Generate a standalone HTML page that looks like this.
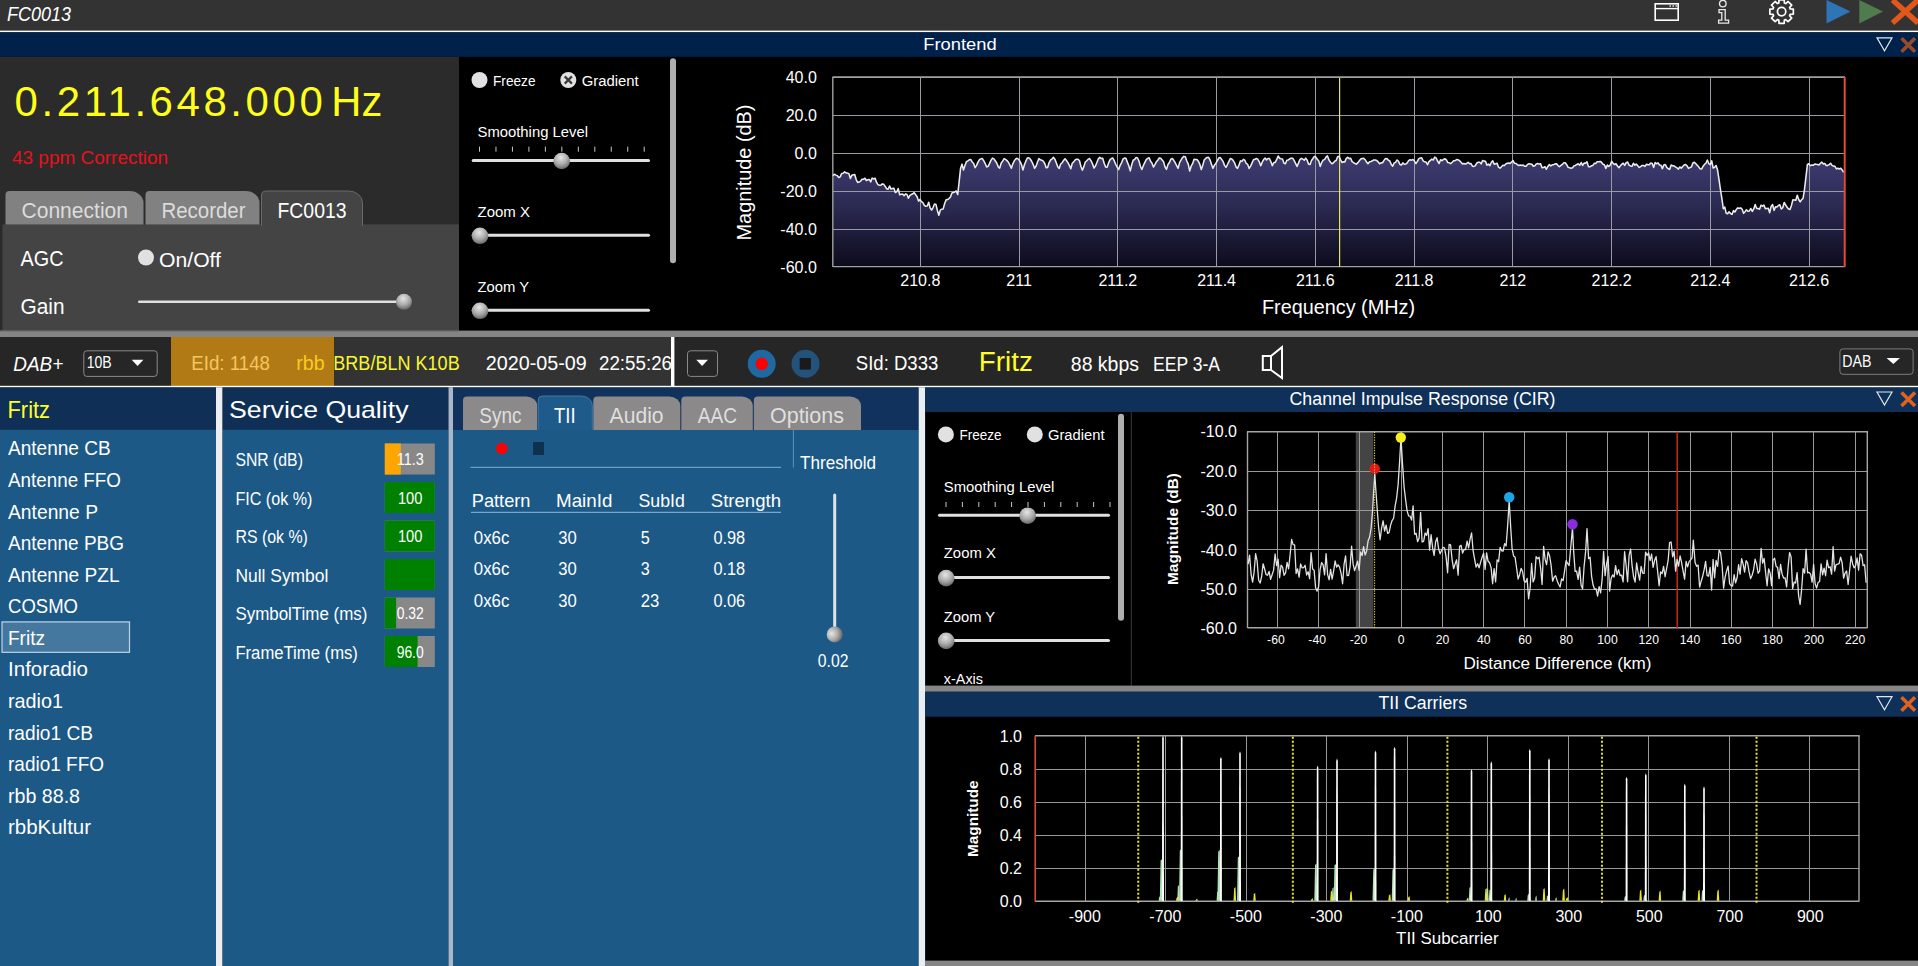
<!DOCTYPE html>
<html><head><meta charset="utf-8"><title>FC0013</title>
<style>
html,body{margin:0;padding:0;background:#000;overflow:hidden}
body{width:1918px;height:966px;font-family:"Liberation Sans",sans-serif}
svg{display:block;font-family:"Liberation Sans",sans-serif}
</style></head><body>
<svg width="1918" height="966" viewBox="0 0 1918 966">
<defs>
<radialGradient id="thumb" cx="0.45" cy="0.3" r="0.75"><stop offset="0" stop-color="#e6e6e6"/><stop offset="0.55" stop-color="#a8a8a8"/><stop offset="1" stop-color="#5a5a5a"/></radialGradient>
<radialGradient id="thumbv" cx="0.3" cy="0.45" r="0.75"><stop offset="0" stop-color="#e6e6e6"/><stop offset="0.55" stop-color="#a8a8a8"/><stop offset="1" stop-color="#5a5a5a"/></radialGradient>
<linearGradient id="specfill" x1="0" y1="155" x2="0" y2="267" gradientUnits="userSpaceOnUse"><stop offset="0" stop-color="#3f3d72"/><stop offset="0.45" stop-color="#2b2a52"/><stop offset="1" stop-color="#0c0b1c"/></linearGradient>
</defs>
<rect x="0" y="0" width="1918" height="30.8" fill="#333333"/>
<rect x="0" y="30.6" width="1918" height="1.7" fill="#ffffff"/>
<text x="7" y="20.6" font-size="19.38" fill="#ffffff" textLength="64" lengthAdjust="spacingAndGlyphs" font-style="italic">FC0013</text>
<rect x="1655.2" y="3.8" width="23" height="16.4" fill="none" stroke="#ffffff" stroke-width="1.6"/>
<line x1="1655" y1="8.6" x2="1678.5" y2="8.6" stroke="#ffffff" stroke-width="1.4"/>
<rect x="1669.5" y="5.3" width="1.4" height="1.4" fill="#ffffff"/>
<rect x="1672.5" y="5.3" width="1.4" height="1.4" fill="#ffffff"/>
<rect x="1675.5" y="5.3" width="1.4" height="1.4" fill="#ffffff"/>
<circle cx="1722.8" cy="3.6" r="3.3" fill="none" stroke="#e8e8e8" stroke-width="1.4"/>
<path d="M1719 9.6 H1725.2 V20.2 H1728.6 V23.2 H1718.6 V20.2 H1721.8 V12.6 H1719 Z" fill="none" stroke="#e8e8e8" stroke-width="1.3"/>
<path d="M1778.82 3.04 L1779.03 -0.12 L1784.17 -0.12 L1784.38 3.04 L1785.69 3.58 L1788.07 1.49 L1791.71 5.13 L1789.62 7.51 L1790.16 8.82 L1793.32 9.03 L1793.32 14.17 L1790.16 14.38 L1789.62 15.69 L1791.71 18.07 L1788.07 21.71 L1785.69 19.62 L1784.38 20.16 L1784.17 23.32 L1779.03 23.32 L1778.82 20.16 L1777.51 19.62 L1775.13 21.71 L1771.49 18.07 L1773.58 15.69 L1773.04 14.38 L1769.88 14.17 L1769.88 9.03 L1773.04 8.82 L1773.58 7.51 L1771.49 5.13 L1775.13 1.49 L1777.51 3.58 Z" fill="none" stroke="#ffffff" stroke-width="1.7" stroke-linejoin="round"/>
<circle cx="1781.6" cy="11.6" r="4.2" fill="none" stroke="#ffffff" stroke-width="1.7"/>
<path d="M1826.5 0 L1850.5 11.4 L1826.5 23.4 Z" fill="#2e75b6"/>
<path d="M1859.3 0 L1883 11.4 L1859.3 23.4 Z" fill="#4f7b4f"/>
<path d="M1892.5 0 L1918 23 M1918 0 L1892.5 23" fill="none" stroke="#e2581a" stroke-width="5.4"/>
<rect x="0" y="32.3" width="1918" height="24.5" fill="#00214a"/>
<text x="923.3" y="49.6" font-size="17.34" fill="#ffffff" textLength="73.4" lengthAdjust="spacingAndGlyphs">Frontend</text>
<path d="M1877 37.8 L1892 37.8 L1884.5 50.8 Z" fill="none" stroke="#dfe6ee" stroke-width="1.2"/>
<path d="M1901.5 38.3 L1915 51.8 M1915 38.3 L1901.5 51.8" fill="none" stroke="#9a4a2a" stroke-width="3.6"/>
<rect x="0" y="56.8" width="459" height="274" fill="#2b2b2b"/>
<text transform="translate(14.6 115.6) scale(1 1)" font-size="42" fill="#ffff19" textLength="308.2" lengthAdjust="spacing">0.211.648.000</text>
<text x="331.3" y="115.6" font-size="42" fill="#ffff19" textLength="51" lengthAdjust="spacingAndGlyphs">Hz</text>
<text x="12" y="164" font-size="18.36" fill="#e8101c" textLength="156" lengthAdjust="spacingAndGlyphs">43 ppm Correction</text>
<rect x="2.5" y="224.4" width="456.5" height="106.4" fill="#444444"/>
<path d="M5.5 224.4 V195 A4 4 0 0 1 9.5 191 H129.5 A14 11.9 0 0 1 143.5 202.9 V224.4 Z" fill="#818181"/>
<path d="M145.5 224.4 V195 A4 4 0 0 1 149.5 191 H245.5 A14 11.9 0 0 1 259.5 202.9 V224.4 Z" fill="#818181"/>
<path d="M261.5 225.5 V195 A4 4 0 0 1 265.5 191 H348.5 A14 11.9 0 0 1 362.5 202.9 V225.5 Z" fill="#444444" stroke="#6a6a6a" stroke-width="1"/>
<rect x="262.1" y="223.5" width="99.8" height="3" fill="#444444"/>
<text x="21.5" y="217.6" font-size="22.24" fill="#dcdcdc" textLength="106.5" lengthAdjust="spacingAndGlyphs">Connection</text>
<text x="161.5" y="217.6" font-size="22.24" fill="#dcdcdc" textLength="84" lengthAdjust="spacingAndGlyphs">Recorder</text>
<text x="277.5" y="217.6" font-size="22.24" fill="#ffffff" textLength="69" lengthAdjust="spacingAndGlyphs">FC0013</text>
<text x="20.5" y="265.6" font-size="21.42" fill="#ffffff" textLength="43" lengthAdjust="spacingAndGlyphs">AGC</text>
<circle cx="146" cy="257.5" r="8" fill="#e1e1e1"/>
<text x="159" y="267" font-size="20.4" fill="#ffffff" textLength="62" lengthAdjust="spacingAndGlyphs">On/Off</text>
<text x="20.5" y="313.6" font-size="21.42" fill="#ffffff" textLength="44" lengthAdjust="spacingAndGlyphs">Gain</text>
<rect x="138" y="300.4" width="266" height="2.6" fill="#e0e0e0" rx="1.3"/>
<circle cx="404" cy="301.8" r="8" fill="url(#thumb)"/>
<circle cx="479.5" cy="80" r="8" fill="#e1e1e1"/>
<text x="493" y="85.8" font-size="15.3" fill="#ffffff" textLength="42.5" lengthAdjust="spacingAndGlyphs">Freeze</text>
<circle cx="568.3" cy="80" r="8" fill="#e1e1e1"/>
<path d="M564.7 76.4 L571.9 83.6 M571.9 76.4 L564.7 83.6" fill="none" stroke="#3a3a3a" stroke-width="2.2"/>
<text x="581.7" y="85.8" font-size="15.3" fill="#ffffff" textLength="57" lengthAdjust="spacingAndGlyphs">Gradient</text>
<text x="477.5" y="136.7" font-size="15.3" fill="#ffffff" textLength="110.5" lengthAdjust="spacingAndGlyphs">Smoothing Level</text>
<line x1="479.5" y1="146.7" x2="479.5" y2="151.7" stroke="#c8c8c8" stroke-width="1"/>
<line x1="495.97" y1="146.7" x2="495.97" y2="151.7" stroke="#c8c8c8" stroke-width="1"/>
<line x1="512.44" y1="146.7" x2="512.44" y2="151.7" stroke="#c8c8c8" stroke-width="1"/>
<line x1="528.91" y1="146.7" x2="528.91" y2="151.7" stroke="#c8c8c8" stroke-width="1"/>
<line x1="545.38" y1="146.7" x2="545.38" y2="151.7" stroke="#c8c8c8" stroke-width="1"/>
<line x1="561.85" y1="146.7" x2="561.85" y2="151.7" stroke="#c8c8c8" stroke-width="1"/>
<line x1="578.32" y1="146.7" x2="578.32" y2="151.7" stroke="#c8c8c8" stroke-width="1"/>
<line x1="594.79" y1="146.7" x2="594.79" y2="151.7" stroke="#c8c8c8" stroke-width="1"/>
<line x1="611.26" y1="146.7" x2="611.26" y2="151.7" stroke="#c8c8c8" stroke-width="1"/>
<line x1="627.73" y1="146.7" x2="627.73" y2="151.7" stroke="#c8c8c8" stroke-width="1"/>
<line x1="644.2" y1="146.7" x2="644.2" y2="151.7" stroke="#c8c8c8" stroke-width="1"/>
<rect x="471.7" y="159" width="178.3" height="3" fill="#e0e0e0" rx="1.5"/>
<circle cx="561.7" cy="161" r="8.3" fill="url(#thumb)"/>
<text x="477.5" y="216.7" font-size="15.3" fill="#ffffff" textLength="52.5" lengthAdjust="spacingAndGlyphs">Zoom X</text>
<rect x="471.7" y="233.8" width="178.3" height="3" fill="#e0e0e0" rx="1.5"/>
<circle cx="480" cy="235.8" r="8.3" fill="url(#thumb)"/>
<text x="477.5" y="291.7" font-size="15.3" fill="#ffffff" textLength="51.5" lengthAdjust="spacingAndGlyphs">Zoom Y</text>
<rect x="471.7" y="308.8" width="178.3" height="3" fill="#e0e0e0" rx="1.5"/>
<circle cx="480" cy="310.8" r="8.3" fill="url(#thumb)"/>
<rect x="670" y="58.3" width="6" height="205" fill="#aeaeae" rx="3"/>
<polygon points="833,267 833,175.62 834.45,174.2 835.9,175.13 837.35,175.79 838.8,177.49 840.25,176.74 841.7,173.42 843.15,173.29 844.6,171.87 846.05,172.91 847.5,173.1 848.95,173.77 850.4,178.41 851.85,175.29 853.3,174.67 854.75,174.56 856.2,179.56 857.65,182.37 859.1,182.07 860.55,181.19 862,179.24 863.45,179.26 864.9,178.23 866.35,180.53 867.8,179.79 869.25,179.46 870.7,181.88 872.15,178.04 873.6,178.94 875.05,178.21 876.5,182.14 877.95,184.62 879.4,185.23 880.85,185.27 882.3,183.9 883.75,184.34 885.2,186.37 886.65,188.78 888.1,189.29 889.55,185.94 891,189.06 892.45,188.55 893.9,188.17 895.35,192.52 896.8,191.56 898.25,188.57 899.7,194.75 901.15,194.36 902.6,193.98 904.05,195.66 905.5,193.88 906.95,194.53 908.4,198.27 909.85,195.34 911.3,194.53 912.75,193.82 914.2,192.67 915.65,194.8 917.1,196.71 918.55,201.13 920,199.4 921.45,201.57 922.9,202.62 924.35,205.27 925.8,206.25 927.25,206.09 928.7,202.28 930.15,208.08 931.6,210.03 933.05,207.56 934.5,203.97 935.95,204.43 937.4,210.5 938.85,215.23 940.3,210.16 941.75,209.17 943.2,208.9 944.65,203.48 946.1,199.86 947.55,199.53 949,198.55 950.45,197.01 951.9,193.04 953.35,192.6 954.8,191.97 956.25,190.97 957.7,194.55 959.15,181.54 960.6,168.16 962.05,164.13 963.5,170.04 964.95,165.46 966.4,161.74 967.85,160.87 969.3,159.78 970.75,159.43 972.2,161.91 973.65,163.55 975.1,167.64 976.55,165.43 978,162.07 979.45,159.68 980.9,158.86 982.35,158.61 983.8,160.82 985.25,163.71 986.7,166.92 988.15,166.38 989.6,163.33 991.05,160.12 992.5,158.16 993.95,158.88 995.4,161.04 996.85,163.28 998.3,166.9 999.75,168.08 1001.2,163.01 1002.65,161.11 1004.1,158.62 1005.55,159.35 1007,160.62 1008.45,162.22 1009.9,165.15 1011.35,168.24 1012.8,163.83 1014.25,160.88 1015.7,159.05 1017.15,158.25 1018.6,159.37 1020.05,161.4 1021.5,164.6 1022.95,170.05 1024.4,164.77 1025.85,161.19 1027.3,158.01 1028.75,157.71 1030.2,158.98 1031.65,161.21 1033.1,164.34 1034.55,168.35 1036,166.22 1037.45,162.19 1038.9,158.63 1040.35,159.78 1041.8,160.23 1043.25,161.06 1044.7,163.49 1046.15,167.62 1047.6,167.47 1049.05,162.83 1050.5,160.02 1051.95,159.08 1053.4,157.3 1054.85,159.16 1056.3,162.69 1057.75,166.8 1059.2,168.52 1060.65,164.04 1062.1,162.78 1063.55,160.41 1065,158.7 1066.45,160.57 1067.9,162.62 1069.35,165.43 1070.8,168.81 1072.25,163.27 1073.7,161.86 1075.15,159.85 1076.6,159.19 1078.05,159.26 1079.5,160.71 1080.95,166.49 1082.4,170.1 1083.85,166.62 1085.3,162.01 1086.75,160.77 1088.2,159.15 1089.65,158.54 1091.1,160.83 1092.55,163.96 1094,168.11 1095.45,166.07 1096.9,162.47 1098.35,158.83 1099.8,157.42 1101.25,158.51 1102.7,158.25 1104.15,163.17 1105.6,166.89 1107.05,167.33 1108.5,163.14 1109.95,159.85 1111.4,158.47 1112.85,158.1 1114.3,160.94 1115.75,164.35 1117.2,167.04 1118.65,169.59 1120.1,165.38 1121.55,162.77 1123,159.07 1124.45,158.11 1125.9,158.27 1127.35,162.13 1128.8,165.81 1130.25,170.9 1131.7,164.79 1133.15,160.18 1134.6,159.48 1136.05,157.48 1137.5,158.01 1138.95,160.97 1140.4,166.28 1141.85,169.53 1143.3,165.67 1144.75,162.56 1146.2,159.64 1147.65,158.36 1149.1,157.73 1150.55,161.13 1152,163.25 1153.45,167.01 1154.9,164.66 1156.35,161.85 1157.8,160.24 1159.25,157.97 1160.7,158.36 1162.15,160.02 1163.6,161.84 1165.05,166.99 1166.5,169.37 1167.95,164.51 1169.4,162.57 1170.85,159.15 1172.3,158.48 1173.75,160.29 1175.2,162.65 1176.65,165.72 1178.1,168.26 1179.55,162.58 1181,160.09 1182.45,157.58 1183.9,156.38 1185.35,156.86 1186.8,160.99 1188.25,164.16 1189.7,170.97 1191.15,166.16 1192.6,163.7 1194.05,159.32 1195.5,159.54 1196.95,159.57 1198.4,161.42 1199.85,164.45 1201.3,169.61 1202.75,165.36 1204.2,160.04 1205.65,158.48 1207.1,157.41 1208.55,157.28 1210,159.82 1211.45,164.13 1212.9,168.35 1214.35,165.33 1215.8,163.42 1217.25,160.87 1218.7,158.08 1220.15,157.57 1221.6,159.36 1223.05,161.35 1224.5,165.38 1225.95,167.27 1227.4,164.53 1228.85,161.58 1230.3,158.48 1231.75,158.89 1233.2,160.56 1234.65,162.93 1236.1,167.05 1237.55,168.31 1239,164.86 1240.45,160.9 1241.9,161.38 1243.35,159.33 1244.8,160.23 1246.25,163.46 1247.7,164.39 1249.15,168.43 1250.6,166.08 1252.05,162.89 1253.5,159.78 1254.95,159.22 1256.4,158.48 1257.85,159.46 1259.3,161.81 1260.75,165.77 1262.2,162.2 1263.65,159.53 1265.1,157.99 1266.55,159.94 1268,158.49 1269.45,158.5 1270.9,161.76 1272.35,165.68 1273.8,162.58 1275.25,162.38 1276.7,159.47 1278.15,155.95 1279.6,158.22 1281.05,158.66 1282.5,159.04 1283.95,163.23 1285.4,163.75 1286.85,160.31 1288.3,159.97 1289.75,158.82 1291.2,158.22 1292.65,158.21 1294.1,160.41 1295.55,163.37 1297,166.45 1298.45,163.12 1299.9,159.53 1301.35,158.4 1302.8,159.14 1304.25,160.24 1305.7,158.08 1307.15,160.18 1308.6,164.12 1310.05,164.43 1311.5,160.57 1312.95,158.51 1314.4,156.31 1315.85,157.21 1317.3,159.22 1318.75,160.92 1320.2,166.39 1321.65,162.53 1323.1,160.04 1324.55,159.62 1326,157.18 1327.45,155.9 1328.9,159.78 1330.35,162.1 1331.8,163.77 1333.25,162.97 1334.7,161.19 1336.15,160.57 1337.6,156.69 1339.05,156.36 1340.5,159.57 1341.95,162.46 1343.4,161.8 1344.85,161.86 1346.3,158.27 1347.75,157.25 1349.2,158.63 1350.65,158.3 1352.1,161.64 1353.55,162.63 1355,163.58 1356.45,164.11 1357.9,162.62 1359.35,160.76 1360.8,159 1362.25,158.43 1363.7,158.38 1365.15,159.72 1366.6,162.15 1368.05,163.67 1369.5,161.78 1370.95,161.43 1372.4,160.83 1373.85,159.9 1375.3,160.02 1376.75,160.49 1378.2,161.92 1379.65,163.76 1381.1,162.89 1382.55,162.76 1384,160.39 1385.45,158.48 1386.9,158.65 1388.35,160.16 1389.8,161.03 1391.25,164.41 1392.7,166.15 1394.15,162.98 1395.6,162.35 1397.05,159.94 1398.5,161.31 1399.95,164.51 1401.4,164.94 1402.85,162.93 1404.3,164.23 1405.75,164.04 1407.2,162.87 1408.65,160.58 1410.1,159.69 1411.55,160.14 1413,159.44 1414.45,161.05 1415.9,163.52 1417.35,161.37 1418.8,158.61 1420.25,158 1421.7,157.77 1423.15,160.81 1424.6,161.78 1426.05,162 1427.5,164.7 1428.95,161.67 1430.4,160.31 1431.85,159.06 1433.3,159.99 1434.75,157.18 1436.2,158.08 1437.65,161.24 1439.1,163.48 1440.55,159.68 1442,160.74 1443.45,159.45 1444.9,158.71 1446.35,159.92 1447.8,162.61 1449.25,162.86 1450.7,163.69 1452.15,162.3 1453.6,160.74 1455.05,160.75 1456.5,159.62 1457.95,159.71 1459.4,160.65 1460.85,161.96 1462.3,163.87 1463.75,163.54 1465.2,164.04 1466.65,163.47 1468.1,162.26 1469.55,163.84 1471,163.61 1472.45,166.23 1473.9,166.46 1475.35,165.54 1476.8,162.98 1478.25,162.33 1479.7,162.16 1481.15,163.84 1482.6,160.47 1484.05,161.12 1485.5,161.31 1486.95,165.1 1488.4,164.17 1489.85,165.59 1491.3,162.51 1492.75,160.82 1494.2,164.25 1495.65,163.8 1497.1,163.23 1498.55,167.18 1500,168.12 1501.45,166.71 1502.9,165.22 1504.35,165.61 1505.8,163.97 1507.25,163.25 1508.7,162.92 1510.15,163.42 1511.6,162 1513.05,160.62 1514.5,163.32 1515.95,163.49 1517.4,164.57 1518.85,165.51 1520.3,165.07 1521.75,165.45 1523.2,165.03 1524.65,166.33 1526.1,166.26 1527.55,164.38 1529,163.84 1530.45,164.07 1531.9,164.33 1533.35,166.17 1534.8,165.67 1536.25,163.96 1537.7,163.54 1539.15,164.12 1540.6,163.76 1542.05,167.69 1543.5,167.53 1544.95,166.56 1546.4,169.27 1547.85,166.42 1549.3,164.59 1550.75,165.86 1552.2,164.84 1553.65,164.69 1555.1,163.87 1556.55,163.82 1558,165.59 1559.45,166.71 1560.9,165.36 1562.35,164.4 1563.8,162.71 1565.25,162.75 1566.7,164.73 1568.15,167.27 1569.6,167.76 1571.05,168.18 1572.5,167.78 1573.95,165.84 1575.4,165.43 1576.85,164.47 1578.3,163.7 1579.75,165.3 1581.2,162.51 1582.65,165.46 1584.1,163.14 1585.55,163.31 1587,161.76 1588.45,166.62 1589.9,166.82 1591.35,165.83 1592.8,165.42 1594.25,163.32 1595.7,163.44 1597.15,161.77 1598.6,161.66 1600.05,161.4 1601.5,162.25 1602.95,164.19 1604.4,164.72 1605.85,168.37 1607.3,165.07 1608.75,166.44 1610.2,164.95 1611.65,161.23 1613.1,163.4 1614.55,164.51 1616,163.78 1617.45,166.04 1618.9,167.64 1620.35,165.84 1621.8,164.25 1623.25,163.25 1624.7,165.38 1626.15,162.68 1627.6,162.01 1629.05,165.1 1630.5,165.94 1631.95,166.3 1633.4,163.24 1634.85,165.19 1636.3,164.04 1637.75,165.72 1639.2,167.43 1640.65,166.6 1642.1,165.44 1643.55,165.47 1645,166.37 1646.45,164.24 1647.9,164.71 1649.35,164.62 1650.8,162.99 1652.25,163.43 1653.7,167.38 1655.15,162.5 1656.6,163.71 1658.05,162.87 1659.5,164.93 1660.95,165.19 1662.4,168.63 1663.85,164.9 1665.3,164.52 1666.75,167.37 1668.2,168.71 1669.65,169.42 1671.1,165 1672.55,165.8 1674,165.89 1675.45,166.9 1676.9,167.79 1678.35,169.13 1679.8,166.95 1681.25,168.2 1682.7,166.44 1684.15,165.06 1685.6,164.44 1687.05,165.84 1688.5,168.38 1689.95,167.58 1691.4,167.04 1692.85,162.96 1694.3,162.26 1695.75,163.59 1697.2,165.19 1698.65,166.86 1700.1,168.73 1701.55,169.01 1703,166.36 1704.45,164.42 1705.9,163.26 1707.35,160.04 1708.8,163.68 1710.25,164.66 1711.7,160.76 1713.15,168.01 1714.6,167.33 1716.05,165.48 1717.5,169.77 1718.95,179.09 1720.4,189.13 1721.85,198.45 1723.3,208.69 1724.75,207.14 1726.2,213.25 1727.65,213.77 1729.1,211.81 1730.55,213.51 1732,214.42 1733.45,210.62 1734.9,212.02 1736.35,209.44 1737.8,207.88 1739.25,208.24 1740.7,207.9 1742.15,209.3 1743.6,213.34 1745.05,211.81 1746.5,209.78 1747.95,211.27 1749.4,210.88 1750.85,208.47 1752.3,211.4 1753.75,208.92 1755.2,204.49 1756.65,208.42 1758.1,208.51 1759.55,209.25 1761,205.21 1762.45,206.24 1763.9,205.17 1765.35,208.62 1766.8,208.51 1768.25,208.33 1769.7,212.65 1771.15,206.44 1772.6,204.6 1774.05,210.34 1775.5,206.68 1776.95,206.95 1778.4,205.45 1779.85,204.75 1781.3,209.03 1782.75,207.71 1784.2,202.5 1785.65,205.03 1787.1,207.27 1788.55,209.06 1790,209.42 1791.45,205.42 1792.9,199.74 1794.35,199.95 1795.8,200.32 1797.25,195.2 1798.7,199.5 1800.15,201.83 1801.6,199.71 1803.05,198.38 1804.5,189.3 1805.95,176.9 1807.4,164.5 1808.85,163.82 1810.3,165.64 1811.75,165.07 1813.2,165.29 1814.65,164.07 1816.1,164.3 1817.55,164.43 1819,164.93 1820.45,163.33 1821.9,162.15 1823.35,164.05 1824.8,163.45 1826.25,165.44 1827.7,165.42 1829.15,164.61 1830.6,163.28 1832.05,165.36 1833.5,166.12 1834.95,166.28 1836.4,168.84 1837.85,168.23 1839.3,169.04 1840.75,168.2 1842.2,170.03 1843.65,172.31 1845,267" fill="url(#specfill)"/>
<line x1="833" y1="115.5" x2="1845" y2="115.5" stroke="#9a9aa4" stroke-width="1"/>
<line x1="833" y1="153.5" x2="1845" y2="153.5" stroke="#9a9aa4" stroke-width="1"/>
<line x1="833" y1="191.5" x2="1845" y2="191.5" stroke="#9a9aa4" stroke-width="1"/>
<line x1="833" y1="229.5" x2="1845" y2="229.5" stroke="#9a9aa4" stroke-width="1"/>
<line x1="920.5" y1="77" x2="920.5" y2="267" stroke="#9a9aa4" stroke-width="1"/>
<line x1="1019.5" y1="77" x2="1019.5" y2="267" stroke="#9a9aa4" stroke-width="1"/>
<line x1="1117.5" y1="77" x2="1117.5" y2="267" stroke="#9a9aa4" stroke-width="1"/>
<line x1="1216.5" y1="77" x2="1216.5" y2="267" stroke="#9a9aa4" stroke-width="1"/>
<line x1="1315.5" y1="77" x2="1315.5" y2="267" stroke="#9a9aa4" stroke-width="1"/>
<line x1="1414.5" y1="77" x2="1414.5" y2="267" stroke="#9a9aa4" stroke-width="1"/>
<line x1="1512.5" y1="77" x2="1512.5" y2="267" stroke="#9a9aa4" stroke-width="1"/>
<line x1="1611.5" y1="77" x2="1611.5" y2="267" stroke="#9a9aa4" stroke-width="1"/>
<line x1="1710.5" y1="77" x2="1710.5" y2="267" stroke="#9a9aa4" stroke-width="1"/>
<line x1="1809.5" y1="77" x2="1809.5" y2="267" stroke="#9a9aa4" stroke-width="1"/>
<line x1="832.5" y1="77.2" x2="1845" y2="77.2" stroke="#a0a0a0" stroke-width="1.8"/>
<line x1="832.8" y1="77" x2="832.8" y2="267" stroke="#a0a0a0" stroke-width="1.4"/>
<line x1="833" y1="266.7" x2="1845" y2="266.7" stroke="#a0a0a0" stroke-width="1.2"/>
<line x1="1339.6" y1="78" x2="1339.6" y2="267" stroke="#e6e650" stroke-width="1.2"/>
<polyline points="833,175.62 834.45,174.2 835.9,175.13 837.35,175.79 838.8,177.49 840.25,176.74 841.7,173.42 843.15,173.29 844.6,171.87 846.05,172.91 847.5,173.1 848.95,173.77 850.4,178.41 851.85,175.29 853.3,174.67 854.75,174.56 856.2,179.56 857.65,182.37 859.1,182.07 860.55,181.19 862,179.24 863.45,179.26 864.9,178.23 866.35,180.53 867.8,179.79 869.25,179.46 870.7,181.88 872.15,178.04 873.6,178.94 875.05,178.21 876.5,182.14 877.95,184.62 879.4,185.23 880.85,185.27 882.3,183.9 883.75,184.34 885.2,186.37 886.65,188.78 888.1,189.29 889.55,185.94 891,189.06 892.45,188.55 893.9,188.17 895.35,192.52 896.8,191.56 898.25,188.57 899.7,194.75 901.15,194.36 902.6,193.98 904.05,195.66 905.5,193.88 906.95,194.53 908.4,198.27 909.85,195.34 911.3,194.53 912.75,193.82 914.2,192.67 915.65,194.8 917.1,196.71 918.55,201.13 920,199.4 921.45,201.57 922.9,202.62 924.35,205.27 925.8,206.25 927.25,206.09 928.7,202.28 930.15,208.08 931.6,210.03 933.05,207.56 934.5,203.97 935.95,204.43 937.4,210.5 938.85,215.23 940.3,210.16 941.75,209.17 943.2,208.9 944.65,203.48 946.1,199.86 947.55,199.53 949,198.55 950.45,197.01 951.9,193.04 953.35,192.6 954.8,191.97 956.25,190.97 957.7,194.55 959.15,181.54 960.6,168.16 962.05,164.13 963.5,170.04 964.95,165.46 966.4,161.74 967.85,160.87 969.3,159.78 970.75,159.43 972.2,161.91 973.65,163.55 975.1,167.64 976.55,165.43 978,162.07 979.45,159.68 980.9,158.86 982.35,158.61 983.8,160.82 985.25,163.71 986.7,166.92 988.15,166.38 989.6,163.33 991.05,160.12 992.5,158.16 993.95,158.88 995.4,161.04 996.85,163.28 998.3,166.9 999.75,168.08 1001.2,163.01 1002.65,161.11 1004.1,158.62 1005.55,159.35 1007,160.62 1008.45,162.22 1009.9,165.15 1011.35,168.24 1012.8,163.83 1014.25,160.88 1015.7,159.05 1017.15,158.25 1018.6,159.37 1020.05,161.4 1021.5,164.6 1022.95,170.05 1024.4,164.77 1025.85,161.19 1027.3,158.01 1028.75,157.71 1030.2,158.98 1031.65,161.21 1033.1,164.34 1034.55,168.35 1036,166.22 1037.45,162.19 1038.9,158.63 1040.35,159.78 1041.8,160.23 1043.25,161.06 1044.7,163.49 1046.15,167.62 1047.6,167.47 1049.05,162.83 1050.5,160.02 1051.95,159.08 1053.4,157.3 1054.85,159.16 1056.3,162.69 1057.75,166.8 1059.2,168.52 1060.65,164.04 1062.1,162.78 1063.55,160.41 1065,158.7 1066.45,160.57 1067.9,162.62 1069.35,165.43 1070.8,168.81 1072.25,163.27 1073.7,161.86 1075.15,159.85 1076.6,159.19 1078.05,159.26 1079.5,160.71 1080.95,166.49 1082.4,170.1 1083.85,166.62 1085.3,162.01 1086.75,160.77 1088.2,159.15 1089.65,158.54 1091.1,160.83 1092.55,163.96 1094,168.11 1095.45,166.07 1096.9,162.47 1098.35,158.83 1099.8,157.42 1101.25,158.51 1102.7,158.25 1104.15,163.17 1105.6,166.89 1107.05,167.33 1108.5,163.14 1109.95,159.85 1111.4,158.47 1112.85,158.1 1114.3,160.94 1115.75,164.35 1117.2,167.04 1118.65,169.59 1120.1,165.38 1121.55,162.77 1123,159.07 1124.45,158.11 1125.9,158.27 1127.35,162.13 1128.8,165.81 1130.25,170.9 1131.7,164.79 1133.15,160.18 1134.6,159.48 1136.05,157.48 1137.5,158.01 1138.95,160.97 1140.4,166.28 1141.85,169.53 1143.3,165.67 1144.75,162.56 1146.2,159.64 1147.65,158.36 1149.1,157.73 1150.55,161.13 1152,163.25 1153.45,167.01 1154.9,164.66 1156.35,161.85 1157.8,160.24 1159.25,157.97 1160.7,158.36 1162.15,160.02 1163.6,161.84 1165.05,166.99 1166.5,169.37 1167.95,164.51 1169.4,162.57 1170.85,159.15 1172.3,158.48 1173.75,160.29 1175.2,162.65 1176.65,165.72 1178.1,168.26 1179.55,162.58 1181,160.09 1182.45,157.58 1183.9,156.38 1185.35,156.86 1186.8,160.99 1188.25,164.16 1189.7,170.97 1191.15,166.16 1192.6,163.7 1194.05,159.32 1195.5,159.54 1196.95,159.57 1198.4,161.42 1199.85,164.45 1201.3,169.61 1202.75,165.36 1204.2,160.04 1205.65,158.48 1207.1,157.41 1208.55,157.28 1210,159.82 1211.45,164.13 1212.9,168.35 1214.35,165.33 1215.8,163.42 1217.25,160.87 1218.7,158.08 1220.15,157.57 1221.6,159.36 1223.05,161.35 1224.5,165.38 1225.95,167.27 1227.4,164.53 1228.85,161.58 1230.3,158.48 1231.75,158.89 1233.2,160.56 1234.65,162.93 1236.1,167.05 1237.55,168.31 1239,164.86 1240.45,160.9 1241.9,161.38 1243.35,159.33 1244.8,160.23 1246.25,163.46 1247.7,164.39 1249.15,168.43 1250.6,166.08 1252.05,162.89 1253.5,159.78 1254.95,159.22 1256.4,158.48 1257.85,159.46 1259.3,161.81 1260.75,165.77 1262.2,162.2 1263.65,159.53 1265.1,157.99 1266.55,159.94 1268,158.49 1269.45,158.5 1270.9,161.76 1272.35,165.68 1273.8,162.58 1275.25,162.38 1276.7,159.47 1278.15,155.95 1279.6,158.22 1281.05,158.66 1282.5,159.04 1283.95,163.23 1285.4,163.75 1286.85,160.31 1288.3,159.97 1289.75,158.82 1291.2,158.22 1292.65,158.21 1294.1,160.41 1295.55,163.37 1297,166.45 1298.45,163.12 1299.9,159.53 1301.35,158.4 1302.8,159.14 1304.25,160.24 1305.7,158.08 1307.15,160.18 1308.6,164.12 1310.05,164.43 1311.5,160.57 1312.95,158.51 1314.4,156.31 1315.85,157.21 1317.3,159.22 1318.75,160.92 1320.2,166.39 1321.65,162.53 1323.1,160.04 1324.55,159.62 1326,157.18 1327.45,155.9 1328.9,159.78 1330.35,162.1 1331.8,163.77 1333.25,162.97 1334.7,161.19 1336.15,160.57 1337.6,156.69 1339.05,156.36 1340.5,159.57 1341.95,162.46 1343.4,161.8 1344.85,161.86 1346.3,158.27 1347.75,157.25 1349.2,158.63 1350.65,158.3 1352.1,161.64 1353.55,162.63 1355,163.58 1356.45,164.11 1357.9,162.62 1359.35,160.76 1360.8,159 1362.25,158.43 1363.7,158.38 1365.15,159.72 1366.6,162.15 1368.05,163.67 1369.5,161.78 1370.95,161.43 1372.4,160.83 1373.85,159.9 1375.3,160.02 1376.75,160.49 1378.2,161.92 1379.65,163.76 1381.1,162.89 1382.55,162.76 1384,160.39 1385.45,158.48 1386.9,158.65 1388.35,160.16 1389.8,161.03 1391.25,164.41 1392.7,166.15 1394.15,162.98 1395.6,162.35 1397.05,159.94 1398.5,161.31 1399.95,164.51 1401.4,164.94 1402.85,162.93 1404.3,164.23 1405.75,164.04 1407.2,162.87 1408.65,160.58 1410.1,159.69 1411.55,160.14 1413,159.44 1414.45,161.05 1415.9,163.52 1417.35,161.37 1418.8,158.61 1420.25,158 1421.7,157.77 1423.15,160.81 1424.6,161.78 1426.05,162 1427.5,164.7 1428.95,161.67 1430.4,160.31 1431.85,159.06 1433.3,159.99 1434.75,157.18 1436.2,158.08 1437.65,161.24 1439.1,163.48 1440.55,159.68 1442,160.74 1443.45,159.45 1444.9,158.71 1446.35,159.92 1447.8,162.61 1449.25,162.86 1450.7,163.69 1452.15,162.3 1453.6,160.74 1455.05,160.75 1456.5,159.62 1457.95,159.71 1459.4,160.65 1460.85,161.96 1462.3,163.87 1463.75,163.54 1465.2,164.04 1466.65,163.47 1468.1,162.26 1469.55,163.84 1471,163.61 1472.45,166.23 1473.9,166.46 1475.35,165.54 1476.8,162.98 1478.25,162.33 1479.7,162.16 1481.15,163.84 1482.6,160.47 1484.05,161.12 1485.5,161.31 1486.95,165.1 1488.4,164.17 1489.85,165.59 1491.3,162.51 1492.75,160.82 1494.2,164.25 1495.65,163.8 1497.1,163.23 1498.55,167.18 1500,168.12 1501.45,166.71 1502.9,165.22 1504.35,165.61 1505.8,163.97 1507.25,163.25 1508.7,162.92 1510.15,163.42 1511.6,162 1513.05,160.62 1514.5,163.32 1515.95,163.49 1517.4,164.57 1518.85,165.51 1520.3,165.07 1521.75,165.45 1523.2,165.03 1524.65,166.33 1526.1,166.26 1527.55,164.38 1529,163.84 1530.45,164.07 1531.9,164.33 1533.35,166.17 1534.8,165.67 1536.25,163.96 1537.7,163.54 1539.15,164.12 1540.6,163.76 1542.05,167.69 1543.5,167.53 1544.95,166.56 1546.4,169.27 1547.85,166.42 1549.3,164.59 1550.75,165.86 1552.2,164.84 1553.65,164.69 1555.1,163.87 1556.55,163.82 1558,165.59 1559.45,166.71 1560.9,165.36 1562.35,164.4 1563.8,162.71 1565.25,162.75 1566.7,164.73 1568.15,167.27 1569.6,167.76 1571.05,168.18 1572.5,167.78 1573.95,165.84 1575.4,165.43 1576.85,164.47 1578.3,163.7 1579.75,165.3 1581.2,162.51 1582.65,165.46 1584.1,163.14 1585.55,163.31 1587,161.76 1588.45,166.62 1589.9,166.82 1591.35,165.83 1592.8,165.42 1594.25,163.32 1595.7,163.44 1597.15,161.77 1598.6,161.66 1600.05,161.4 1601.5,162.25 1602.95,164.19 1604.4,164.72 1605.85,168.37 1607.3,165.07 1608.75,166.44 1610.2,164.95 1611.65,161.23 1613.1,163.4 1614.55,164.51 1616,163.78 1617.45,166.04 1618.9,167.64 1620.35,165.84 1621.8,164.25 1623.25,163.25 1624.7,165.38 1626.15,162.68 1627.6,162.01 1629.05,165.1 1630.5,165.94 1631.95,166.3 1633.4,163.24 1634.85,165.19 1636.3,164.04 1637.75,165.72 1639.2,167.43 1640.65,166.6 1642.1,165.44 1643.55,165.47 1645,166.37 1646.45,164.24 1647.9,164.71 1649.35,164.62 1650.8,162.99 1652.25,163.43 1653.7,167.38 1655.15,162.5 1656.6,163.71 1658.05,162.87 1659.5,164.93 1660.95,165.19 1662.4,168.63 1663.85,164.9 1665.3,164.52 1666.75,167.37 1668.2,168.71 1669.65,169.42 1671.1,165 1672.55,165.8 1674,165.89 1675.45,166.9 1676.9,167.79 1678.35,169.13 1679.8,166.95 1681.25,168.2 1682.7,166.44 1684.15,165.06 1685.6,164.44 1687.05,165.84 1688.5,168.38 1689.95,167.58 1691.4,167.04 1692.85,162.96 1694.3,162.26 1695.75,163.59 1697.2,165.19 1698.65,166.86 1700.1,168.73 1701.55,169.01 1703,166.36 1704.45,164.42 1705.9,163.26 1707.35,160.04 1708.8,163.68 1710.25,164.66 1711.7,160.76 1713.15,168.01 1714.6,167.33 1716.05,165.48 1717.5,169.77 1718.95,179.09 1720.4,189.13 1721.85,198.45 1723.3,208.69 1724.75,207.14 1726.2,213.25 1727.65,213.77 1729.1,211.81 1730.55,213.51 1732,214.42 1733.45,210.62 1734.9,212.02 1736.35,209.44 1737.8,207.88 1739.25,208.24 1740.7,207.9 1742.15,209.3 1743.6,213.34 1745.05,211.81 1746.5,209.78 1747.95,211.27 1749.4,210.88 1750.85,208.47 1752.3,211.4 1753.75,208.92 1755.2,204.49 1756.65,208.42 1758.1,208.51 1759.55,209.25 1761,205.21 1762.45,206.24 1763.9,205.17 1765.35,208.62 1766.8,208.51 1768.25,208.33 1769.7,212.65 1771.15,206.44 1772.6,204.6 1774.05,210.34 1775.5,206.68 1776.95,206.95 1778.4,205.45 1779.85,204.75 1781.3,209.03 1782.75,207.71 1784.2,202.5 1785.65,205.03 1787.1,207.27 1788.55,209.06 1790,209.42 1791.45,205.42 1792.9,199.74 1794.35,199.95 1795.8,200.32 1797.25,195.2 1798.7,199.5 1800.15,201.83 1801.6,199.71 1803.05,198.38 1804.5,189.3 1805.95,176.9 1807.4,164.5 1808.85,163.82 1810.3,165.64 1811.75,165.07 1813.2,165.29 1814.65,164.07 1816.1,164.3 1817.55,164.43 1819,164.93 1820.45,163.33 1821.9,162.15 1823.35,164.05 1824.8,163.45 1826.25,165.44 1827.7,165.42 1829.15,164.61 1830.6,163.28 1832.05,165.36 1833.5,166.12 1834.95,166.28 1836.4,168.84 1837.85,168.23 1839.3,169.04 1840.75,168.2 1842.2,170.03 1843.65,172.31" fill="none" stroke="#ececec" stroke-width="1.55" stroke-linejoin="round"/>
<line x1="1844.7" y1="77" x2="1844.7" y2="267" stroke="#e8483c" stroke-width="2"/>
<text x="816.8" y="82.8" font-size="16" fill="#ffffff" text-anchor="end">40.0</text>
<text x="816.8" y="120.8" font-size="16" fill="#ffffff" text-anchor="end">20.0</text>
<text x="816.8" y="158.8" font-size="16" fill="#ffffff" text-anchor="end">0.0</text>
<text x="816.8" y="196.8" font-size="16" fill="#ffffff" text-anchor="end">-20.0</text>
<text x="816.8" y="234.8" font-size="16" fill="#ffffff" text-anchor="end">-40.0</text>
<text x="816.8" y="272.8" font-size="16" fill="#ffffff" text-anchor="end">-60.0</text>
<text x="920.3" y="285.7" font-size="16" fill="#ffffff" text-anchor="middle">210.8</text>
<text x="1019.06" y="285.7" font-size="16" fill="#ffffff" text-anchor="middle">211</text>
<text x="1117.82" y="285.7" font-size="16" fill="#ffffff" text-anchor="middle">211.2</text>
<text x="1216.58" y="285.7" font-size="16" fill="#ffffff" text-anchor="middle">211.4</text>
<text x="1315.34" y="285.7" font-size="16" fill="#ffffff" text-anchor="middle">211.6</text>
<text x="1414.1" y="285.7" font-size="16" fill="#ffffff" text-anchor="middle">211.8</text>
<text x="1512.86" y="285.7" font-size="16" fill="#ffffff" text-anchor="middle">212</text>
<text x="1611.62" y="285.7" font-size="16" fill="#ffffff" text-anchor="middle">212.2</text>
<text x="1710.38" y="285.7" font-size="16" fill="#ffffff" text-anchor="middle">212.4</text>
<text x="1809.14" y="285.7" font-size="16" fill="#ffffff" text-anchor="middle">212.6</text>
<text x="1338.5" y="314" font-size="20.3" fill="#ffffff" textLength="153" lengthAdjust="spacingAndGlyphs" text-anchor="middle">Frequency (MHz)</text>
<text transform="translate(750.5 172.5) rotate(-90)" font-size="20" fill="#ffffff" text-anchor="middle" textLength="136" lengthAdjust="spacingAndGlyphs">Magnitude (dB)</text>
<rect x="0" y="330.6" width="1918" height="6.6" fill="#858585"/>
<rect x="0" y="330.2" width="459" height="1.2" fill="#5c5c5c"/>
<rect x="0" y="337" width="1918" height="49" fill="#262626"/>
<rect x="171" y="337" width="163" height="49" fill="#b27a14"/>
<rect x="334" y="337" width="337" height="49" fill="#333333"/>
<rect x="671" y="337" width="3.4" height="49" fill="#ffffff"/>
<rect x="0" y="385.8" width="1918" height="1.7" fill="#ffffff"/>
<text x="13.3" y="370.8" font-size="20.4" fill="#ffffff" textLength="50" lengthAdjust="spacingAndGlyphs" font-style="italic">DAB+</text>
<rect x="83.8" y="350.8" width="73.4" height="25.6" fill="none" rx="3" stroke="#8a8a8a" stroke-width="1"/>
<text x="86.7" y="368" font-size="16.52" fill="#ffffff" textLength="25" lengthAdjust="spacingAndGlyphs">10B</text>
<path d="M131.7 359.7 H143.4 L137.55 365.9 Z" fill="#ffffff"/>
<text x="191.3" y="369.7" font-size="19.38" fill="#f6c55e" textLength="78.7" lengthAdjust="spacingAndGlyphs">EId: 1148</text>
<text x="296.3" y="369.7" font-size="19.38" fill="#f8cc1c" textLength="28.5" lengthAdjust="spacingAndGlyphs">rbb</text>
<text x="333.3" y="369.7" font-size="19.38" fill="#f8f82e" textLength="126.4" lengthAdjust="spacingAndGlyphs">BRB/BLN K10B</text>
<clipPath id="dateclip"><rect x="334" y="337" width="337" height="49"/></clipPath>
<g clip-path="url(#dateclip)">
<text x="485.8" y="369.7" font-size="19.38" fill="#ffffff" textLength="101" lengthAdjust="spacingAndGlyphs">2020-05-09</text>
<text x="599" y="369.7" font-size="19.38" fill="#ffffff" textLength="73" lengthAdjust="spacingAndGlyphs">22:55:26</text>
</g>
<rect x="687.5" y="350.8" width="30" height="25.6" fill="none" rx="3" stroke="#8a8a8a" stroke-width="1"/>
<path d="M696.3 359.7 H708 L702.15 365.9 Z" fill="#ffffff"/>
<circle cx="761.7" cy="363.8" r="14" fill="#1f69a3"/>
<circle cx="761.7" cy="363.8" r="6.2" fill="#ff0000"/>
<circle cx="805.5" cy="363.8" r="14" fill="#23527b"/>
<rect x="799.7" y="358" width="11.2" height="11.6" fill="#1a1a1a"/>
<text x="855.8" y="370.3" font-size="19.38" fill="#ffffff" textLength="82.5" lengthAdjust="spacingAndGlyphs">SId: D333</text>
<text x="978.8" y="370.8" font-size="28.56" fill="#ffff28" textLength="54" lengthAdjust="spacingAndGlyphs">Fritz</text>
<text x="1070.8" y="370.8" font-size="19.38" fill="#ffffff" textLength="68.2" lengthAdjust="spacingAndGlyphs">88 kbps</text>
<text x="1153" y="370.8" font-size="19.38" fill="#ffffff" textLength="67" lengthAdjust="spacingAndGlyphs">EEP 3-A</text>
<path d="M1262.8 356 H1271 V370 H1262.8 Z M1271 356 L1282 347.2 V378 L1271 370" fill="none" stroke="#ffffff" stroke-width="2" stroke-linejoin="miter"/>
<rect x="1839.9" y="348.9" width="73.2" height="25.4" fill="none" rx="3" stroke="#7c7c7c" stroke-width="1"/>
<text x="1842.2" y="366.6" font-size="16.52" fill="#ffffff" textLength="29.2" lengthAdjust="spacingAndGlyphs">DAB</text>
<path d="M1886.6 358 H1900 L1893.3 363.9 Z" fill="#ffffff"/>
<rect x="0" y="387.4" width="216" height="42.2" fill="#0f2f56"/>
<rect x="0" y="429.5" width="216" height="536.5" fill="#1c5987"/>
<rect x="216" y="387.4" width="6.6" height="578.6" fill="#eeeef2"/>
<text x="7.5" y="417.5" font-size="24.48" fill="#ffff28" textLength="42.5" lengthAdjust="spacingAndGlyphs">Fritz</text>
<rect x="2" y="621.9" width="127.5" height="30.4" fill="#45789f" stroke="#bdd3ea" stroke-width="1.2"/>
<text x="8" y="455.4" font-size="20.3" fill="#ffffff" textLength="102.6" lengthAdjust="spacingAndGlyphs">Antenne CB</text>
<text x="8" y="486.98" font-size="20.3" fill="#ffffff" textLength="113" lengthAdjust="spacingAndGlyphs">Antenne FFO</text>
<text x="8" y="518.56" font-size="20.3" fill="#ffffff" textLength="90" lengthAdjust="spacingAndGlyphs">Antenne P</text>
<text x="8" y="550.14" font-size="20.3" fill="#ffffff" textLength="116" lengthAdjust="spacingAndGlyphs">Antenne PBG</text>
<text x="8" y="581.72" font-size="20.3" fill="#ffffff" textLength="111.5" lengthAdjust="spacingAndGlyphs">Antenne PZL</text>
<text x="8" y="613.3" font-size="20.3" fill="#ffffff" textLength="70" lengthAdjust="spacingAndGlyphs">COSMO</text>
<text x="8" y="644.88" font-size="20.3" fill="#ffffff" textLength="37" lengthAdjust="spacingAndGlyphs">Fritz</text>
<text x="8" y="676.46" font-size="20.3" fill="#ffffff" textLength="80" lengthAdjust="spacingAndGlyphs">Inforadio</text>
<text x="8" y="708.04" font-size="20.3" fill="#ffffff" textLength="55" lengthAdjust="spacingAndGlyphs">radio1</text>
<text x="8" y="739.62" font-size="20.3" fill="#ffffff" textLength="85" lengthAdjust="spacingAndGlyphs">radio1 CB</text>
<text x="8" y="771.2" font-size="20.3" fill="#ffffff" textLength="96" lengthAdjust="spacingAndGlyphs">radio1 FFO</text>
<text x="8" y="802.78" font-size="20.3" fill="#ffffff" textLength="72" lengthAdjust="spacingAndGlyphs">rbb 88.8</text>
<text x="8" y="834.36" font-size="20.3" fill="#ffffff" textLength="83" lengthAdjust="spacingAndGlyphs">rbbKultur</text>
<rect x="222.6" y="387.4" width="226" height="42.2" fill="#0f2f56"/>
<rect x="222.6" y="429.5" width="226" height="536.5" fill="#1c5987"/>
<rect x="448.5" y="387.4" width="4.6" height="578.6" fill="#a9b7cb"/>
<text x="229" y="417.5" font-size="24.48" fill="#ffffff" textLength="179.5" lengthAdjust="spacingAndGlyphs">Service Quality</text>
<text x="235.4" y="466" font-size="18.97" fill="#ffffff" textLength="67.5" lengthAdjust="spacingAndGlyphs">SNR (dB)</text>
<rect x="384.8" y="443.5" width="50" height="31" fill="#888888"/>
<rect x="384.8" y="443.5" width="16" height="31" fill="#ffa500"/>
<text x="410.2" y="465.4" font-size="16.32" fill="#ffffff" textLength="27" lengthAdjust="spacingAndGlyphs" text-anchor="middle">11.3</text>
<text x="235.4" y="504.5" font-size="18.97" fill="#ffffff" textLength="77" lengthAdjust="spacingAndGlyphs">FIC (ok %)</text>
<rect x="384.8" y="482" width="50" height="31" fill="#888888"/>
<rect x="384.8" y="482" width="50" height="31" fill="#008000"/>
<text x="410.2" y="503.9" font-size="16.32" fill="#ffffff" textLength="24.5" lengthAdjust="spacingAndGlyphs" text-anchor="middle">100</text>
<text x="235.4" y="543" font-size="18.97" fill="#ffffff" textLength="72.5" lengthAdjust="spacingAndGlyphs">RS (ok %)</text>
<rect x="384.8" y="520.5" width="50" height="31" fill="#888888"/>
<rect x="384.8" y="520.5" width="50" height="31" fill="#008000"/>
<text x="410.2" y="542.4" font-size="16.32" fill="#ffffff" textLength="24.5" lengthAdjust="spacingAndGlyphs" text-anchor="middle">100</text>
<text x="235.4" y="581.5" font-size="18.97" fill="#ffffff" textLength="93" lengthAdjust="spacingAndGlyphs">Null Symbol</text>
<rect x="384.8" y="559" width="50" height="31" fill="#888888"/>
<rect x="384.8" y="559" width="50" height="31" fill="#008000"/>
<text x="235.4" y="620" font-size="18.97" fill="#ffffff" textLength="132" lengthAdjust="spacingAndGlyphs">SymbolTime (ms)</text>
<rect x="384.8" y="597.5" width="50" height="31" fill="#888888"/>
<rect x="384.8" y="597.5" width="11.3" height="31" fill="#008000"/>
<text x="410.2" y="619.4" font-size="16.32" fill="#ffffff" textLength="27" lengthAdjust="spacingAndGlyphs" text-anchor="middle">0.32</text>
<text x="235.4" y="658.5" font-size="18.97" fill="#ffffff" textLength="122.5" lengthAdjust="spacingAndGlyphs">FrameTime (ms)</text>
<rect x="384.8" y="636" width="50" height="31" fill="#888888"/>
<rect x="384.8" y="636" width="32.8" height="31" fill="#008000"/>
<text x="410.2" y="657.9" font-size="16.32" fill="#ffffff" textLength="27" lengthAdjust="spacingAndGlyphs" text-anchor="middle">96.0</text>
<rect x="453" y="387.4" width="465.8" height="43" fill="#10325c"/>
<rect x="453" y="430" width="465.8" height="536" fill="#1c5987"/>
<rect x="918.7" y="387.4" width="6.4" height="578.6" fill="#e9eef3"/>
<path d="M463 430 V400.4 A4 4 0 0 1 467 396.4 H526.2 A11 9.35 0 0 1 537.2 405.75 V430 Z" fill="#8b8989"/>
<text x="479.3" y="423" font-size="22.24" fill="#dfdfdf" textLength="42.2" lengthAdjust="spacingAndGlyphs">Sync</text>
<path d="M538.2 431 V400 A4 4 0 0 1 542.2 396 H581.3 A11 9.35 0 0 1 592.3 405.35 V431 Z" fill="#1e5b8a" stroke="#3f79a8" stroke-width="1"/>
<rect x="537.7" y="429.6" width="55.1" height="2.4" fill="#1c5987"/>
<text x="554" y="423" font-size="22.24" fill="#ffffff" textLength="21.5" lengthAdjust="spacingAndGlyphs">TII</text>
<path d="M593.3 430 V400.4 A4 4 0 0 1 597.3 396.4 H669.3 A11 9.35 0 0 1 680.3 405.75 V430 Z" fill="#8b8989"/>
<text x="609.6" y="423" font-size="22.24" fill="#dfdfdf" textLength="54" lengthAdjust="spacingAndGlyphs">Audio</text>
<path d="M681.3 430 V400.4 A4 4 0 0 1 685.3 396.4 H741.8 A11 9.35 0 0 1 752.8 405.75 V430 Z" fill="#8b8989"/>
<text x="697.8" y="423" font-size="22.24" fill="#dfdfdf" textLength="39.4" lengthAdjust="spacingAndGlyphs">AAC</text>
<path d="M753.8 430 V400.4 A4 4 0 0 1 757.8 396.4 H850 A11 9.35 0 0 1 861 405.75 V430 Z" fill="#8b8989"/>
<text x="770" y="423" font-size="22.24" fill="#dfdfdf" textLength="74" lengthAdjust="spacingAndGlyphs">Options</text>
<circle cx="501.8" cy="448.5" r="5.8" fill="#ff0000"/>
<rect x="533" y="442" width="11" height="13" fill="#10304f"/>
<line x1="470.5" y1="467.3" x2="781" y2="467.3" stroke="#7fb0d8" stroke-width="1"/>
<line x1="793.4" y1="430" x2="793.4" y2="467.6" stroke="#5f93bd" stroke-width="1"/>
<text x="471.8" y="507.3" font-size="18.36" fill="#ffffff" textLength="58.7" lengthAdjust="spacingAndGlyphs">Pattern</text>
<text x="556" y="507.3" font-size="18.36" fill="#ffffff" textLength="56.4" lengthAdjust="spacingAndGlyphs">MainId</text>
<text x="638.5" y="507.3" font-size="18.36" fill="#ffffff" textLength="46.3" lengthAdjust="spacingAndGlyphs">SubId</text>
<text x="710.8" y="507.3" font-size="18.36" fill="#ffffff" textLength="70.2" lengthAdjust="spacingAndGlyphs">Strength</text>
<line x1="471" y1="512.3" x2="781" y2="512.3" stroke="#8fbbe0" stroke-width="1"/>
<text x="473.8" y="543.8" font-size="17.85" fill="#ffffff" textLength="35.5" lengthAdjust="spacingAndGlyphs">0x6c</text>
<text x="558.2" y="543.8" font-size="17.85" fill="#ffffff" textLength="18.5" lengthAdjust="spacingAndGlyphs">30</text>
<text x="640.7" y="543.8" font-size="17.85" fill="#ffffff" textLength="9" lengthAdjust="spacingAndGlyphs">5</text>
<text x="713.4" y="543.8" font-size="17.85" fill="#ffffff" textLength="31.8" lengthAdjust="spacingAndGlyphs">0.98</text>
<text x="473.8" y="575.25" font-size="17.85" fill="#ffffff" textLength="35.5" lengthAdjust="spacingAndGlyphs">0x6c</text>
<text x="558.2" y="575.25" font-size="17.85" fill="#ffffff" textLength="18.5" lengthAdjust="spacingAndGlyphs">30</text>
<text x="640.7" y="575.25" font-size="17.85" fill="#ffffff" textLength="9" lengthAdjust="spacingAndGlyphs">3</text>
<text x="713.4" y="575.25" font-size="17.85" fill="#ffffff" textLength="31.8" lengthAdjust="spacingAndGlyphs">0.18</text>
<text x="473.8" y="606.7" font-size="17.85" fill="#ffffff" textLength="35.5" lengthAdjust="spacingAndGlyphs">0x6c</text>
<text x="558.2" y="606.7" font-size="17.85" fill="#ffffff" textLength="18.5" lengthAdjust="spacingAndGlyphs">30</text>
<text x="640.7" y="606.7" font-size="17.85" fill="#ffffff" textLength="18.5" lengthAdjust="spacingAndGlyphs">23</text>
<text x="713.4" y="606.7" font-size="17.85" fill="#ffffff" textLength="31.8" lengthAdjust="spacingAndGlyphs">0.06</text>
<text x="800" y="468.8" font-size="18.36" fill="#ffffff" textLength="76" lengthAdjust="spacingAndGlyphs">Threshold</text>
<rect x="833.2" y="493.5" width="3" height="135" fill="#dfe3e8" rx="1.5"/>
<circle cx="834.7" cy="634.4" r="8" fill="url(#thumbv)"/>
<text x="817.8" y="667" font-size="17.85" fill="#ffffff" textLength="30.6" lengthAdjust="spacingAndGlyphs">0.02</text>
<rect x="925" y="387.4" width="993" height="24.6" fill="#0f3058"/>
<text x="1289.5" y="405" font-size="17.85" fill="#ffffff" textLength="266" lengthAdjust="spacingAndGlyphs">Channel Impulse Response (CIR)</text>
<path d="M1877 392 L1892 392 L1884.5 405 Z" fill="none" stroke="#dfe6ee" stroke-width="1.2"/>
<path d="M1901.5 392.5 L1915 406 M1915 392.5 L1901.5 406" fill="none" stroke="#e2611c" stroke-width="3.6"/>
<circle cx="945.9" cy="434.4" r="8" fill="#e1e1e1"/>
<text x="959.4" y="440" font-size="15.3" fill="#ffffff" textLength="42" lengthAdjust="spacingAndGlyphs">Freeze</text>
<circle cx="1034.8" cy="434.4" r="8" fill="#e1e1e1"/>
<text x="1048" y="440" font-size="15.3" fill="#ffffff" textLength="56.5" lengthAdjust="spacingAndGlyphs">Gradient</text>
<text x="943.8" y="491.5" font-size="15.3" fill="#ffffff" textLength="110.6" lengthAdjust="spacingAndGlyphs">Smoothing Level</text>
<line x1="946" y1="502" x2="946" y2="507" stroke="#c8c8c8" stroke-width="1"/>
<line x1="962.4" y1="502" x2="962.4" y2="507" stroke="#c8c8c8" stroke-width="1"/>
<line x1="978.8" y1="502" x2="978.8" y2="507" stroke="#c8c8c8" stroke-width="1"/>
<line x1="995.2" y1="502" x2="995.2" y2="507" stroke="#c8c8c8" stroke-width="1"/>
<line x1="1011.6" y1="502" x2="1011.6" y2="507" stroke="#c8c8c8" stroke-width="1"/>
<line x1="1028" y1="502" x2="1028" y2="507" stroke="#c8c8c8" stroke-width="1"/>
<line x1="1044.4" y1="502" x2="1044.4" y2="507" stroke="#c8c8c8" stroke-width="1"/>
<line x1="1060.8" y1="502" x2="1060.8" y2="507" stroke="#c8c8c8" stroke-width="1"/>
<line x1="1077.2" y1="502" x2="1077.2" y2="507" stroke="#c8c8c8" stroke-width="1"/>
<line x1="1093.6" y1="502" x2="1093.6" y2="507" stroke="#c8c8c8" stroke-width="1"/>
<line x1="1110" y1="502" x2="1110" y2="507" stroke="#c8c8c8" stroke-width="1"/>
<rect x="938" y="513.7" width="172" height="3" fill="#e0e0e0" rx="1.5"/>
<circle cx="1027.7" cy="515.7" r="8.3" fill="url(#thumb)"/>
<text x="943.8" y="558.3" font-size="15.3" fill="#ffffff" textLength="52" lengthAdjust="spacingAndGlyphs">Zoom X</text>
<rect x="938" y="576.1" width="172" height="3" fill="#e0e0e0" rx="1.5"/>
<circle cx="946.2" cy="578.1" r="8.3" fill="url(#thumb)"/>
<text x="943.8" y="621.9" font-size="15.3" fill="#ffffff" textLength="51.3" lengthAdjust="spacingAndGlyphs">Zoom Y</text>
<rect x="938" y="638.9" width="172" height="3" fill="#e0e0e0" rx="1.5"/>
<circle cx="946.2" cy="640.9" r="8.3" fill="url(#thumb)"/>
<text x="943.8" y="683.7" font-size="15.3" fill="#ffffff" textLength="39.2" lengthAdjust="spacingAndGlyphs">x-Axis</text>
<rect x="1118" y="413.8" width="6" height="207" fill="#aeaeae" rx="3"/>
<line x1="1131.3" y1="412" x2="1131.3" y2="685.6" stroke="#3a3a3a" stroke-width="1"/>
<rect x="1355.8" y="431.7" width="17.6" height="196.3" fill="#444444"/>
<line x1="1247.5" y1="471.5" x2="1867.6" y2="471.5" stroke="#989898" stroke-width="1"/>
<line x1="1247.5" y1="510.5" x2="1867.6" y2="510.5" stroke="#989898" stroke-width="1"/>
<line x1="1247.5" y1="549.5" x2="1867.6" y2="549.5" stroke="#989898" stroke-width="1"/>
<line x1="1247.5" y1="589.5" x2="1867.6" y2="589.5" stroke="#989898" stroke-width="1"/>
<line x1="1277.5" y1="431.7" x2="1277.5" y2="628" stroke="#989898" stroke-width="1"/>
<line x1="1318.5" y1="431.7" x2="1318.5" y2="628" stroke="#989898" stroke-width="1"/>
<line x1="1359.5" y1="431.7" x2="1359.5" y2="628" stroke="#989898" stroke-width="1"/>
<line x1="1401.5" y1="431.7" x2="1401.5" y2="628" stroke="#989898" stroke-width="1"/>
<line x1="1442.5" y1="431.7" x2="1442.5" y2="628" stroke="#989898" stroke-width="1"/>
<line x1="1483.5" y1="431.7" x2="1483.5" y2="628" stroke="#989898" stroke-width="1"/>
<line x1="1524.5" y1="431.7" x2="1524.5" y2="628" stroke="#989898" stroke-width="1"/>
<line x1="1566.5" y1="431.7" x2="1566.5" y2="628" stroke="#989898" stroke-width="1"/>
<line x1="1607.5" y1="431.7" x2="1607.5" y2="628" stroke="#989898" stroke-width="1"/>
<line x1="1648.5" y1="431.7" x2="1648.5" y2="628" stroke="#989898" stroke-width="1"/>
<line x1="1690.5" y1="431.7" x2="1690.5" y2="628" stroke="#989898" stroke-width="1"/>
<line x1="1731.5" y1="431.7" x2="1731.5" y2="628" stroke="#989898" stroke-width="1"/>
<line x1="1772.5" y1="431.7" x2="1772.5" y2="628" stroke="#989898" stroke-width="1"/>
<line x1="1813.5" y1="431.7" x2="1813.5" y2="628" stroke="#989898" stroke-width="1"/>
<line x1="1855.5" y1="431.7" x2="1855.5" y2="628" stroke="#989898" stroke-width="1"/>
<line x1="1247" y1="431.7" x2="1868.1" y2="431.7" stroke="#a6a6a6" stroke-width="1.6"/>
<line x1="1247.5" y1="431.7" x2="1247.5" y2="628" stroke="#a6a6a6" stroke-width="1.4"/>
<line x1="1247.5" y1="627.8" x2="1867.6" y2="627.8" stroke="#a6a6a6" stroke-width="1.4"/>
<line x1="1867.3" y1="431.7" x2="1867.3" y2="628" stroke="#a6a6a6" stroke-width="1.4"/>
<line x1="1374.6" y1="431.7" x2="1374.6" y2="628" stroke="#e6e03c" stroke-width="1" stroke-dasharray="1.3 1.3"/>
<line x1="1677.2" y1="431.7" x2="1677.2" y2="628" stroke="#d02a1e" stroke-width="1.45"/>
<polyline points="1248.1,564.16 1249.6,555.19 1251.1,574.02 1252.6,582.17 1254.1,572.17 1255.6,553.76 1257.1,560.81 1258.6,579.96 1260.1,583.05 1261.6,576.74 1263.1,563.79 1264.6,568.95 1266.1,574.55 1267.6,575.27 1269.1,571.38 1270.6,579.37 1272.1,574.69 1273.6,570.13 1275.1,554 1276.6,565.64 1278.1,559.34 1279.6,577.6 1281.1,565.03 1282.6,567.39 1284.1,575.27 1285.6,572.82 1287.1,562.28 1288.6,568.75 1290.1,554.84 1291.6,539.46 1293.1,544.67 1294.6,544.78 1296.1,573.51 1297.6,568.8 1299.1,577.14 1300.6,563.97 1302.1,567.81 1303.6,567.72 1305.1,565.25 1306.6,575 1308.1,571.73 1309.6,578.62 1311.1,552.68 1312.6,568.9 1314.1,570.14 1315.6,587.68 1317.1,591.14 1318.6,586.74 1320.1,569.28 1321.6,562.52 1323.1,564.88 1324.6,574.81 1326.1,553.61 1327.6,574.31 1329.1,579.92 1330.6,569.41 1332.1,579.15 1333.6,571.11 1335.1,561 1336.6,567.17 1338.1,564.78 1339.6,567.11 1341.1,573.4 1342.6,583.75 1344.1,564.15 1345.6,555.98 1347.1,575.69 1348.6,575.32 1350.1,566.72 1351.6,546.16 1353.1,564.17 1354.6,570.66 1356.1,566.07 1357.6,561.18 1359.1,570.23 1360.6,551.98 1362.1,555.62 1363.6,546.54 1365.1,554.93 1366.6,551.16 1368.1,540.76 1369.6,537.12 1371.1,528.36 1372.6,510.56 1374.7,472.28 1375.6,486.61 1377.1,507.81 1378.6,527.45 1380.1,539.76 1381.6,528.06 1383.1,520.77 1384.6,531.07 1386.1,525.1 1387.6,533.43 1389.1,532.59 1390.6,525.14 1392.1,520.54 1393.6,518.26 1395.1,506.11 1396.6,498.19 1398.1,484.8 1399.6,461.35 1401,438 1402.6,465.09 1404.1,487.27 1405.6,499.46 1407.1,510.85 1408.6,515.84 1410.1,516.18 1411.6,520.06 1413.1,505.89 1414.6,534.18 1416.1,533.41 1417.6,541.66 1419.1,538 1420.6,512.36 1422.1,541.98 1423.6,541.49 1425.1,533.02 1426.6,535.44 1428.1,528.64 1429.6,550.16 1431.1,534.75 1432.6,547.91 1434.1,555.48 1435.6,541.97 1437.1,537.73 1438.6,548.59 1440.1,553.86 1441.6,550.23 1443.1,547.27 1444.6,548.1 1446.1,557.17 1447.6,572.74 1449.1,544.39 1450.6,544.87 1452.1,559.77 1453.6,568.71 1455.1,564.06 1456.6,559.82 1458.1,575.11 1459.6,546.35 1461.1,545.35 1462.6,553.11 1464.1,549.39 1465.6,549.55 1467.1,541.17 1468.6,547.9 1470.1,539.06 1471.6,532.97 1473.1,550.71 1474.6,559.15 1476.1,567.06 1477.6,563.72 1479.1,567.81 1480.6,562.14 1482.1,557.2 1483.6,553.18 1485.1,569.52 1486.6,552.85 1488.1,561.32 1489.6,562.73 1491.1,567.62 1492.6,583.75 1494.1,568.61 1495.6,581.85 1497.1,559.83 1498.6,561.71 1500.1,547.32 1501.6,550.87 1503.1,551 1504.6,543.55 1506.1,546.01 1507.6,526.41 1509.2,500.65 1510.6,525.64 1512.1,548.78 1513.6,555.98 1515.1,557.32 1516.6,567.97 1518.1,579.06 1519.6,574.68 1521.1,568.38 1522.6,571.6 1524.1,580.83 1525.6,582.16 1527.1,578.4 1528.6,598.79 1530.1,588.5 1531.6,563.52 1533.1,581.94 1534.6,578.07 1536.1,556.56 1537.6,558.69 1539.1,557.25 1540.6,568.05 1542.1,584.39 1543.6,546.28 1545.1,559.17 1546.6,564.71 1548.1,551.87 1549.6,555.87 1551.1,565.4 1552.6,581.2 1554.1,577.25 1555.6,575.67 1557.1,580.56 1558.6,584.3 1560.1,586.98 1561.6,578.93 1563.1,580.56 1564.6,570.8 1566.1,560.62 1567.6,563.45 1569.1,565.52 1570.6,549.01 1572.5,527.84 1573.6,550.19 1575.1,571.42 1576.6,571.16 1578.1,579.4 1579.6,567.06 1581.1,585.13 1582.6,588.8 1584.1,566.32 1585.6,551.64 1587,528.62 1588.6,558.69 1590.1,557.26 1591.6,576.33 1593.1,585.05 1594.6,589.16 1596.1,588.79 1597.6,596.13 1599.1,586.67 1600.6,592.87 1602.1,579.67 1603.6,551.33 1605.1,575.65 1606.6,564 1608.1,556.76 1609.6,591.05 1611.1,578.45 1612.6,574.91 1614.1,577.04 1615.6,565.71 1617.1,574.67 1618.6,569.59 1620.1,575.61 1621.6,575.2 1623.1,581.96 1624.6,551.72 1626.1,565.28 1627.6,581.81 1629.1,555.17 1630.6,549.03 1632.1,565.78 1633.6,577.05 1635.1,582.19 1636.6,563 1638.1,572.48 1639.6,580.2 1641.1,566.46 1642.6,573.17 1644.1,573.41 1645.6,552.08 1647.1,555.53 1648.6,552.74 1650.1,560.58 1651.6,554.21 1653.1,567.47 1654.6,560.31 1656.1,556.68 1657.6,571 1659.1,585.78 1660.6,571.89 1662.1,573.64 1663.6,566.48 1665.1,576.74 1666.6,568.51 1668.1,560.72 1669.6,542.64 1671.1,542 1672.6,556.79 1674.1,551.15 1675.6,571.17 1677.1,559.44 1678.6,566.07 1680.1,555.8 1681.6,562.56 1683.1,571.04 1684.6,579.07 1686.1,561.46 1687.6,566.94 1689.1,561.66 1690.6,559.87 1692.1,557.75 1693.3,540.05 1695.1,562.61 1696.6,566.34 1698.1,565.13 1699.6,587.04 1701.1,581.44 1702.6,576.54 1704.1,569.92 1705.6,561.48 1707.1,575.6 1708.6,576.2 1710.1,567.29 1711.6,590.11 1713.1,559.4 1714.6,577.74 1716.1,560.43 1717.6,566.45 1719.1,550.03 1720.6,552.85 1722.1,565.51 1723.6,588.13 1725.1,577.14 1726.6,570.88 1728.1,566.12 1729.6,583.71 1731.1,585.73 1732.6,585.99 1734.1,574.72 1735.6,582.77 1737.1,577.77 1738.6,564.61 1740.1,574.12 1741.6,558.74 1743.1,564.19 1744.6,572.08 1746.1,560.66 1747.6,562.76 1749.1,571.93 1750.6,578.57 1752.1,575.26 1753.6,569.78 1755.1,559.15 1756.6,564.09 1758.1,573.25 1759.6,571.03 1761.1,548.33 1762.6,563.19 1764.1,558.32 1765.6,572.36 1767.1,585.77 1768.6,568.84 1770.1,572.98 1771.6,585.67 1773.1,559.83 1774.6,558.23 1776.1,566.49 1777.6,567.31 1779.1,578.62 1780.6,564.28 1782.1,574.13 1783.6,578.07 1785.1,577.91 1786.6,586.87 1788.1,567.03 1789.6,552.58 1791.1,556.85 1792.6,588.72 1794.1,582.04 1795.6,583.09 1797.1,572.62 1798.6,595.62 1800.1,604.45 1801.6,589.7 1803.1,568.61 1804.6,573.16 1806.1,549.13 1807.6,572.84 1809.1,572.32 1810.6,574.13 1812.1,582.14 1813.6,564.34 1815.1,583.69 1816.6,588.15 1818.1,582.43 1819.6,581.47 1821.1,563.88 1822.6,574.93 1824.1,568.08 1825.6,575.74 1827.1,560.03 1828.6,567.6 1830.1,566.76 1831.6,574.09 1833.1,546.76 1834.6,571.16 1836.1,564.51 1837.6,564.11 1839.1,563.53 1840.6,557.09 1842.1,562.66 1843.6,578.2 1845.1,573.05 1846.6,570.95 1848.1,584.52 1849.6,570.55 1851.1,556.09 1852.6,563.69 1854.1,567.88 1855.6,565.65 1857.1,557.89 1858.6,570.14 1860.1,553.84 1861.6,555.22 1863.1,565.56 1864.6,564.76 1866.1,582.77" fill="none" stroke="#e2e2e2" stroke-width="1.3" stroke-linejoin="round"/>
<circle cx="1374.7" cy="468.8" r="5.2" fill="#e41a1a"/>
<line x1="1374.6" y1="464" x2="1374.6" y2="474" stroke="#e6e03c" stroke-width="0.8" stroke-dasharray="1.3 1.3"/>
<circle cx="1400.8" cy="437.5" r="5.2" fill="#f5ee1e"/>
<circle cx="1509.2" cy="497.2" r="5.2" fill="#1ca7e4"/>
<circle cx="1572.5" cy="524.2" r="5.2" fill="#8a2be2"/>
<text x="1237" y="437.3" font-size="16" fill="#ffffff" text-anchor="end">-10.0</text>
<text x="1237" y="476.7" font-size="16" fill="#ffffff" text-anchor="end">-20.0</text>
<text x="1237" y="516.1" font-size="16" fill="#ffffff" text-anchor="end">-30.0</text>
<text x="1237" y="555.5" font-size="16" fill="#ffffff" text-anchor="end">-40.0</text>
<text x="1237" y="594.9" font-size="16" fill="#ffffff" text-anchor="end">-50.0</text>
<text x="1237" y="634.3" font-size="16" fill="#ffffff" text-anchor="end">-60.0</text>
<text x="1275.92" y="643.8" font-size="12.2" fill="#ffffff" text-anchor="middle">-60</text>
<text x="1317.18" y="643.8" font-size="12.2" fill="#ffffff" text-anchor="middle">-40</text>
<text x="1358.44" y="643.8" font-size="12.2" fill="#ffffff" text-anchor="middle">-20</text>
<text x="1401.2" y="643.8" font-size="12.2" fill="#ffffff" text-anchor="middle">0</text>
<text x="1442.46" y="643.8" font-size="12.2" fill="#ffffff" text-anchor="middle">20</text>
<text x="1483.72" y="643.8" font-size="12.2" fill="#ffffff" text-anchor="middle">40</text>
<text x="1524.98" y="643.8" font-size="12.2" fill="#ffffff" text-anchor="middle">60</text>
<text x="1566.24" y="643.8" font-size="12.2" fill="#ffffff" text-anchor="middle">80</text>
<text x="1607.5" y="643.8" font-size="12.2" fill="#ffffff" text-anchor="middle">100</text>
<text x="1648.76" y="643.8" font-size="12.2" fill="#ffffff" text-anchor="middle">120</text>
<text x="1690.02" y="643.8" font-size="12.2" fill="#ffffff" text-anchor="middle">140</text>
<text x="1731.28" y="643.8" font-size="12.2" fill="#ffffff" text-anchor="middle">160</text>
<text x="1772.54" y="643.8" font-size="12.2" fill="#ffffff" text-anchor="middle">180</text>
<text x="1813.8" y="643.8" font-size="12.2" fill="#ffffff" text-anchor="middle">200</text>
<text x="1855.06" y="643.8" font-size="12.2" fill="#ffffff" text-anchor="middle">220</text>
<text x="1557.5" y="668.6" font-size="15.8" fill="#ffffff" textLength="188" lengthAdjust="spacingAndGlyphs" text-anchor="middle">Distance Difference (km)</text>
<text transform="translate(1178 529) rotate(-90)" font-size="14.5" fill="#ffffff" text-anchor="middle" textLength="112" lengthAdjust="spacingAndGlyphs" font-weight="bold">Magnitude (dB)</text>
<rect x="925" y="685.6" width="993" height="6.2" fill="#868686"/>
<rect x="925" y="691.7" width="993" height="25" fill="#0f3058"/>
<text x="1378.5" y="709.4" font-size="17.85" fill="#ffffff" textLength="88.5" lengthAdjust="spacingAndGlyphs">TII Carriers</text>
<path d="M1877 696.7 L1892 696.7 L1884.5 709.7 Z" fill="none" stroke="#dfe6ee" stroke-width="1.2"/>
<path d="M1901.5 697.2 L1915 710.7 M1915 697.2 L1901.5 710.7" fill="none" stroke="#e2611c" stroke-width="3.6"/>
<rect x="925" y="960.6" width="993" height="5.4" fill="#868686"/>
<line x1="1035" y1="769.5" x2="1859.2" y2="769.5" stroke="#989898" stroke-width="1"/>
<line x1="1035" y1="802.5" x2="1859.2" y2="802.5" stroke="#989898" stroke-width="1"/>
<line x1="1035" y1="835.5" x2="1859.2" y2="835.5" stroke="#989898" stroke-width="1"/>
<line x1="1035" y1="868.5" x2="1859.2" y2="868.5" stroke="#989898" stroke-width="1"/>
<line x1="1085.5" y1="735.8" x2="1085.5" y2="901.6" stroke="#989898" stroke-width="1"/>
<line x1="1165.5" y1="735.8" x2="1165.5" y2="901.6" stroke="#989898" stroke-width="1"/>
<line x1="1246.5" y1="735.8" x2="1246.5" y2="901.6" stroke="#989898" stroke-width="1"/>
<line x1="1326.5" y1="735.8" x2="1326.5" y2="901.6" stroke="#989898" stroke-width="1"/>
<line x1="1407.5" y1="735.8" x2="1407.5" y2="901.6" stroke="#989898" stroke-width="1"/>
<line x1="1487.5" y1="735.8" x2="1487.5" y2="901.6" stroke="#989898" stroke-width="1"/>
<line x1="1568.5" y1="735.8" x2="1568.5" y2="901.6" stroke="#989898" stroke-width="1"/>
<line x1="1648.5" y1="735.8" x2="1648.5" y2="901.6" stroke="#989898" stroke-width="1"/>
<line x1="1729.5" y1="735.8" x2="1729.5" y2="901.6" stroke="#989898" stroke-width="1"/>
<line x1="1809.5" y1="735.8" x2="1809.5" y2="901.6" stroke="#989898" stroke-width="1"/>
<line x1="1035" y1="735.8" x2="1859.7" y2="735.8" stroke="#a6a6a6" stroke-width="1.6"/>
<line x1="1035" y1="901.3" x2="1859.2" y2="901.3" stroke="#a6a6a6" stroke-width="1.6"/>
<line x1="1859" y1="735.8" x2="1859" y2="901.6" stroke="#a6a6a6" stroke-width="1.4"/>
<line x1="1035.2" y1="735.8" x2="1035.2" y2="901.6" stroke="#d8483c" stroke-width="1.6"/>
<line x1="1138.28" y1="736.8" x2="1138.28" y2="903.1" stroke="#e8e23a" stroke-width="2" stroke-dasharray="2 2"/>
<line x1="1292.84" y1="736.8" x2="1292.84" y2="903.1" stroke="#e8e23a" stroke-width="2" stroke-dasharray="2 2"/>
<line x1="1447.4" y1="736.8" x2="1447.4" y2="903.1" stroke="#e8e23a" stroke-width="2" stroke-dasharray="2 2"/>
<line x1="1601.96" y1="736.8" x2="1601.96" y2="903.1" stroke="#e8e23a" stroke-width="2" stroke-dasharray="2 2"/>
<line x1="1756.52" y1="736.8" x2="1756.52" y2="903.1" stroke="#e8e23a" stroke-width="2" stroke-dasharray="2 2"/>
<path d="M1159.8 900.8 L1160.6 860.5 L1162.2 859 L1163 900.8 Z" fill="#b4e2b4"/>
<path d="M1179 900.8 L1179.8 850.5 L1181.4 849 L1182.2 900.8 Z" fill="#b4e2b4"/>
<path d="M1217.4 900.8 L1218.2 851.5 L1219.8 850 L1220.6 900.8 Z" fill="#b4e2b4"/>
<path d="M1237 900.8 L1237.8 857.5 L1239.4 856 L1240.2 900.8 Z" fill="#b4e2b4"/>
<path d="M1314.3 900.8 L1315.05 864.9 L1316.55 863.4 L1317.3 900.8 Z" fill="#b4e2b4"/>
<path d="M1333.7 900.8 L1334.45 865.5 L1335.95 864 L1336.7 900.8 Z" fill="#b4e2b4"/>
<path d="M1372.5 900.8 L1373.25 869.8 L1374.75 868.3 L1375.5 900.8 Z" fill="#b4e2b4"/>
<path d="M1391.7 900.8 L1392.45 869.8 L1393.95 868.3 L1394.7 900.8 Z" fill="#b4e2b4"/>
<path d="M1177.3 900.8 L1177.85 886.5 L1178.95 885 L1179.5 900.8 Z" fill="#b4e2b4"/>
<path d="M1216.6 900.8 L1217.1 892.5 L1218.1 891 L1218.6 900.8 Z" fill="#b4e2b4"/>
<path d="M1331.9 900.8 L1332.45 888.5 L1333.55 887 L1334.1 900.8 Z" fill="#b4e2b4"/>
<path d="M1158.6 900.8 L1159.1 897.5 L1160.1 896 L1160.6 900.8 Z" fill="#b4e2b4"/>
<path d="M1468.8 900.8 L1469.4 888 L1470.6 886.5 L1471.2 900.8 Z" fill="#b4e2b4"/>
<path d="M1486.3 900.8 L1486.9 889.5 L1488.1 888 L1488.7 900.8 Z" fill="#b4e2b4"/>
<path d="M1488.8 900.8 L1489.4 890.5 L1490.6 889 L1491.2 900.8 Z" fill="#b4e2b4"/>
<path d="M1527.2 900.8 L1527.75 895 L1528.85 893.5 L1529.4 900.8 Z" fill="#b4e2b4"/>
<path d="M1546.4 900.8 L1546.95 896.5 L1548.05 895 L1548.6 900.8 Z" fill="#b4e2b4"/>
<path d="M1624.1 900.8 L1624.65 897 L1625.75 895.5 L1626.3 900.8 Z" fill="#b4e2b4"/>
<path d="M1643.3 900.8 L1643.85 896 L1644.95 894.5 L1645.5 900.8 Z" fill="#b4e2b4"/>
<path d="M1682.2 900.8 L1682.8 891.5 L1684 890 L1684.6 900.8 Z" fill="#b4e2b4"/>
<path d="M1701.4 900.8 L1702 891 L1703.2 889.5 L1703.8 900.8 Z" fill="#b4e2b4"/>
<path d="M1535.1 900.8 L1535.55 897 L1536.45 895.5 L1536.9 900.8 Z" fill="#b4e2b4"/>
<path d="M1555.1 900.8 L1555.55 898.5 L1556.45 897 L1556.9 900.8 Z" fill="#b4e2b4"/>
<path d="M1508.2 900.8 L1508.6 898.5 L1509.4 897 L1509.8 900.8 Z" fill="#b4e2b4"/>
<path d="M1515.2 900.8 L1515.6 899 L1516.4 897.5 L1516.8 900.8 Z" fill="#b4e2b4"/>
<path d="M1175.9 900.8 L1176.55 897.9 L1177.85 896.4 L1178.5 900.8 Z" fill="#e6e628"/>
<path d="M1233.5 900.8 L1234.15 888.5 L1235.45 887 L1236.1 900.8 Z" fill="#e6e628"/>
<path d="M1253.2 900.8 L1253.85 894.2 L1255.15 892.7 L1255.8 900.8 Z" fill="#e6e628"/>
<path d="M1330.2 900.8 L1330.85 891.7 L1332.15 890.2 L1332.8 900.8 Z" fill="#e6e628"/>
<path d="M1349.7 900.8 L1350.35 892.5 L1351.65 891 L1352.3 900.8 Z" fill="#e6e628"/>
<path d="M1388.3 900.8 L1388.95 895.5 L1390.25 894 L1390.9 900.8 Z" fill="#e6e628"/>
<path d="M1407.5 900.8 L1408.15 897.5 L1409.45 896 L1410.1 900.8 Z" fill="#e6e628"/>
<path d="M1484.7 900.8 L1485.35 889.5 L1486.65 888 L1487.3 900.8 Z" fill="#e6e628"/>
<path d="M1503.7 900.8 L1504.35 895.5 L1505.65 894 L1506.3 900.8 Z" fill="#e6e628"/>
<path d="M1542.7 900.8 L1543.35 889.5 L1544.65 888 L1545.3 900.8 Z" fill="#e6e628"/>
<path d="M1562.3 900.8 L1562.95 890 L1564.25 888.5 L1564.9 900.8 Z" fill="#e6e628"/>
<path d="M1639.3 900.8 L1639.95 891 L1641.25 889.5 L1641.9 900.8 Z" fill="#e6e628"/>
<path d="M1658.6 900.8 L1659.25 892 L1660.55 890.5 L1661.2 900.8 Z" fill="#e6e628"/>
<path d="M1697.6 900.8 L1698.25 891 L1699.55 889.5 L1700.2 900.8 Z" fill="#e6e628"/>
<path d="M1716.7 900.8 L1717.35 891 L1718.65 889.5 L1719.3 900.8 Z" fill="#e6e628"/>
<path d="M1195.2 900.8 L1195.85 900 L1197.15 898.5 L1197.8 900.8 Z" fill="#e6e628"/>
<path d="M1310.7 900.8 L1311.35 899.5 L1312.65 898 L1313.3 900.8 Z" fill="#e6e628"/>
<path d="M1565.7 900.8 L1566.35 898.5 L1567.65 897 L1568.3 900.8 Z" fill="#e6e628"/>
<path d="M1466.2 900.8 L1466.85 899 L1468.15 897.5 L1468.8 900.8 Z" fill="#e6e628"/>
<path d="M1162 901 L1162.2 738 L1163 735.5 L1163.8 738 L1164 901 Z" fill="#ffffff"/>
<path d="M1180.7 901 L1180.9 738 L1181.7 735.5 L1182.5 738 L1182.7 901 Z" fill="#ffffff"/>
<path d="M1219.9 901 L1220.1 759.3 L1220.9 756.8 L1221.7 759.3 L1221.9 901 Z" fill="#ffffff"/>
<path d="M1239 901 L1239.2 753.8 L1240 751.3 L1240.8 753.8 L1241 901 Z" fill="#ffffff"/>
<path d="M1316.6 901 L1316.8 768 L1317.6 765.5 L1318.4 768 L1318.6 901 Z" fill="#ffffff"/>
<path d="M1336 901 L1336.2 761 L1337 758.5 L1337.8 761 L1338 901 Z" fill="#ffffff"/>
<path d="M1374.5 901 L1374.7 753 L1375.5 750.5 L1376.3 753 L1376.5 901 Z" fill="#ffffff"/>
<path d="M1393.6 901 L1393.8 749.3 L1394.6 746.8 L1395.4 749.3 L1395.6 901 Z" fill="#ffffff"/>
<path d="M1470.5 901 L1470.7 771.5 L1471.5 769 L1472.3 771.5 L1472.5 901 Z" fill="#ffffff"/>
<path d="M1490.3 901 L1490.5 763.7 L1491.3 761.2 L1492.1 763.7 L1492.3 901 Z" fill="#ffffff"/>
<path d="M1528.8 901 L1529 751.2 L1529.8 748.7 L1530.6 751.2 L1530.8 901 Z" fill="#ffffff"/>
<path d="M1548 901 L1548.2 760.6 L1549 758.1 L1549.8 760.6 L1550 901 Z" fill="#ffffff"/>
<path d="M1625.6 901 L1625.8 779.3 L1626.6 776.8 L1627.4 779.3 L1627.6 901 Z" fill="#ffffff"/>
<path d="M1644.8 901 L1645 775.7 L1645.8 773.2 L1646.6 775.7 L1646.8 901 Z" fill="#ffffff"/>
<path d="M1683.8 901 L1684 786 L1684.8 783.5 L1685.6 786 L1685.8 901 Z" fill="#ffffff"/>
<path d="M1703 901 L1703.2 788.7 L1704 786.2 L1704.8 788.7 L1705 901 Z" fill="#ffffff"/>
<text x="1022" y="741.8" font-size="16" fill="#ffffff" text-anchor="end">1.0</text>
<text x="1022" y="774.92" font-size="16" fill="#ffffff" text-anchor="end">0.8</text>
<text x="1022" y="808.04" font-size="16" fill="#ffffff" text-anchor="end">0.6</text>
<text x="1022" y="841.16" font-size="16" fill="#ffffff" text-anchor="end">0.4</text>
<text x="1022" y="874.28" font-size="16" fill="#ffffff" text-anchor="end">0.2</text>
<text x="1022" y="907.4" font-size="16" fill="#ffffff" text-anchor="end">0.0</text>
<text x="1084.85" y="921.5" font-size="16" fill="#ffffff" text-anchor="middle">-900</text>
<text x="1165.35" y="921.5" font-size="16" fill="#ffffff" text-anchor="middle">-700</text>
<text x="1245.85" y="921.5" font-size="16" fill="#ffffff" text-anchor="middle">-500</text>
<text x="1326.35" y="921.5" font-size="16" fill="#ffffff" text-anchor="middle">-300</text>
<text x="1406.85" y="921.5" font-size="16" fill="#ffffff" text-anchor="middle">-100</text>
<text x="1488.25" y="921.5" font-size="16" fill="#ffffff" text-anchor="middle">100</text>
<text x="1568.75" y="921.5" font-size="16" fill="#ffffff" text-anchor="middle">300</text>
<text x="1649.25" y="921.5" font-size="16" fill="#ffffff" text-anchor="middle">500</text>
<text x="1729.75" y="921.5" font-size="16" fill="#ffffff" text-anchor="middle">700</text>
<text x="1810.25" y="921.5" font-size="16" fill="#ffffff" text-anchor="middle">900</text>
<text x="1447.3" y="944.3" font-size="15.8" fill="#ffffff" textLength="102.5" lengthAdjust="spacingAndGlyphs" text-anchor="middle">TII Subcarrier</text>
<text transform="translate(978 818.7) rotate(-90)" font-size="14.5" fill="#ffffff" text-anchor="middle" textLength="76.5" lengthAdjust="spacingAndGlyphs" font-weight="bold">Magnitude</text>
</svg>
</body></html>
